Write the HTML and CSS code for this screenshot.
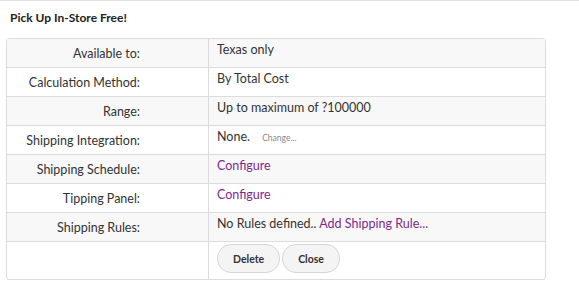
FILE: index.html
```html
<!DOCTYPE html>
<html lang="en">
<head>
    <meta charset="UTF-8">
    <title>Shipping Method</title>
    <link rel="stylesheet" href="styles.css">
</head>
<body>
    <div class="panel">
        <h3 class="panel-title">Pick Up In-Store Free!</h3>
        <table class="details">
            <tr class="odd">
                <td class="label">Available to:</td>
                <td class="value">Texas only</td>
            </tr>
            <tr>
                <td class="label">Calculation Method:</td>
                <td class="value">By Total Cost</td>
            </tr>
            <tr class="odd">
                <td class="label">Range:</td>
                <td class="value">Up to maximum of ?100000</td>
            </tr>
            <tr>
                <td class="label">Shipping Integration:</td>
                <td class="value">None. <a class="change-link" href="#">Change...</a></td>
            </tr>
            <tr class="odd">
                <td class="label">Shipping Schedule:</td>
                <td class="value"><a href="#">Configure</a></td>
            </tr>
            <tr>
                <td class="label">Tipping Panel:</td>
                <td class="value"><a href="#">Configure</a></td>
            </tr>
            <tr class="odd">
                <td class="label">Shipping Rules:</td>
                <td class="value">No Rules defined.. <a href="#">Add Shipping Rule...</a></td>
            </tr>
            <tr class="actions">
                <td class="label"></td>
                <td class="value">
                    <button class="pill-button">Delete</button><button class="pill-button">Close</button>
                </td>
            </tr>
        </table>
    </div>
</body>
</html>
```

FILE: styles.css
```css
body {
    font-family: Lato, 'Open Sans', sans-serif;
    margin: 0;
    padding: 0;
    color: #333;
    background: white;
    border-top: 1px solid #e2e2e2;
}
.panel {
    padding: 0 6px;
}
.panel-title {
    font-size: 12px;
    font-weight: bold;
    margin: 0;
    padding: 9px 0 0 4px;
    height: 37px;
    box-sizing: border-box;
    color: #222;
}
.details {
    width: 540px;
    border: 1px solid #dcdcdc;
    border-radius: 3px;
    border-spacing: 0;
    font-size: 12.5px;
}
.details td {
    border-top: 1px solid #dcdcdc;
    height: 29px;
    box-sizing: border-box;
}
.details tr:first-child td {
    border-top: none;
    height: 28px;
}
.details tr.odd td {
    background-color: #f8f8f8;
}
.label {
    width: 202px;
    text-align: right;
    padding: 0 68px 0 0;
    vertical-align: middle;
    border-right: 1px solid #dcdcdc;
    box-sizing: border-box;
}
.value {
    vertical-align: top;
    padding: 3px 0 0 8px;
}
a {
    color: #7b2a8a;
    text-decoration: none;
}
.change-link {
    color: #888;
    font-size: 8.5px;
    margin-left: 9px;
}
.details tr.actions td {
    height: 38px;
}
.actions .value {
    padding-top: 2px;
}
.pill-button {
    font-family: inherit;
    font-size: 10.5px;
    font-weight: bold;
    color: #333;
    background: #f4f4f4;
    border: 1px solid #d6d6d6;
    border-radius: 14px;
    height: 29px;
    padding: 0 15px;
    margin-right: 2px;
    cursor: pointer;
}
```
